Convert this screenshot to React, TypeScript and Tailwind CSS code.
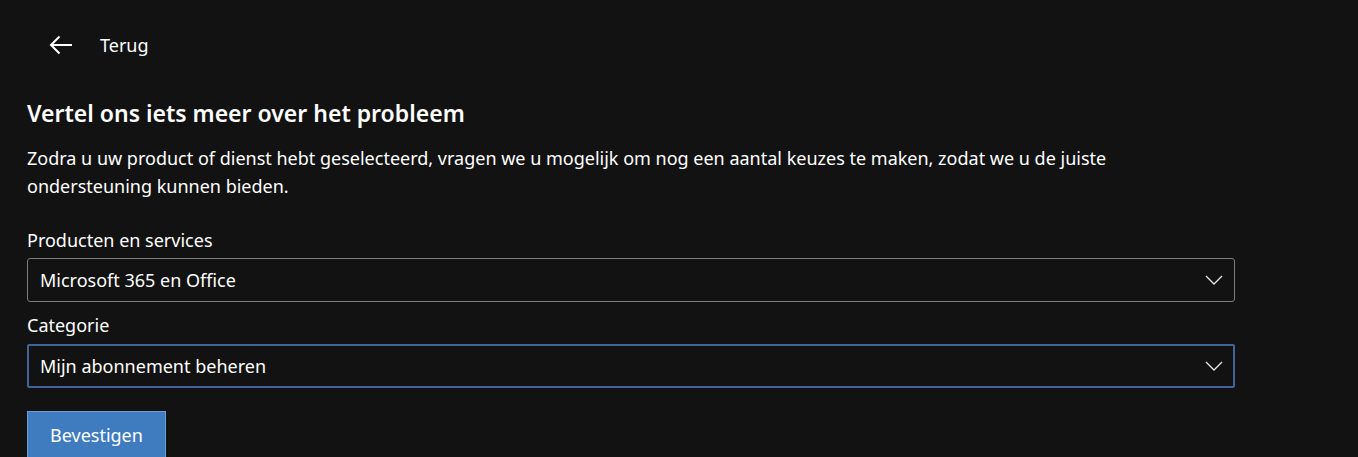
import { useState } from "react"

const font = { fontFamily: '"Noto Sans", "Open Sans", Arial, sans-serif' }

function Chevron() {
  return (
    <svg width="18" height="10" viewBox="0 0 18 10" fill="none" className="shrink-0">
      <path d="M1 1l8 8 8-8" stroke="#e6e6e6" strokeWidth="1.3" />
    </svg>
  )
}

function SelectBox({ value, focused }: { value: string; focused?: boolean }) {
  return (
    <div
      className={
        focused
          ? "flex h-[44px] w-[1208px] items-center justify-between rounded-[2px] border-2 border-[#41659a] pl-[11px] pr-[10px]"
          : "flex h-[44px] w-[1208px] items-center justify-between rounded-[3px] border border-[#7d7d7d] pl-[12px] pr-[11px]"
      }
    >
      <span className="text-[18px] text-white">{value}</span>
      <Chevron />
    </div>
  )
}

export default function App() {
  const [product] = useState("Microsoft 365 en Office")
  const [category] = useState("Mijn abonnement beheren")

  return (
    <div className="min-h-[457px] w-full overflow-hidden bg-[#121212] text-white" style={font}>
      <div className="flex h-[90px] items-center pl-[49px]">
        <svg width="24" height="20" viewBox="0 0 24 20" fill="none">
          <path d="M23 10H2M10.5 1.5L2 10l8.5 8.5" stroke="#ffffff" strokeWidth="2" />
        </svg>
        <span className="ml-[27px] text-[18px]">Terug</span>
      </div>

      <div className="px-[27px]">
        <h1 className="mt-[7px] text-[23px] font-semibold leading-[32px]">Vertel ons iets meer over het probleem</h1>
        <p className="mt-[15px] w-[1150px] text-[18px] leading-[28px]">
          Zodra u uw product of dienst hebt geselecteerd, vragen we u mogelijk om nog een aantal keuzes te maken,
          zodat we u de juiste ondersteuning kunnen bieden.
        </p>

        <div className="mt-[26px] mb-[4px] text-[18px] leading-[28px]">Producten en services</div>
        <SelectBox value={product} />

        <div className="mt-[9px] mb-[5px] text-[18px] leading-[28px]">Categorie</div>
        <SelectBox value={category} focused />

        <button className="mt-[23px] h-[48px] border border-[#6d9fd6] bg-[#3f7bbf] px-[22px] text-[18px] text-white">
          Bevestigen
        </button>
      </div>
    </div>
  )
}
